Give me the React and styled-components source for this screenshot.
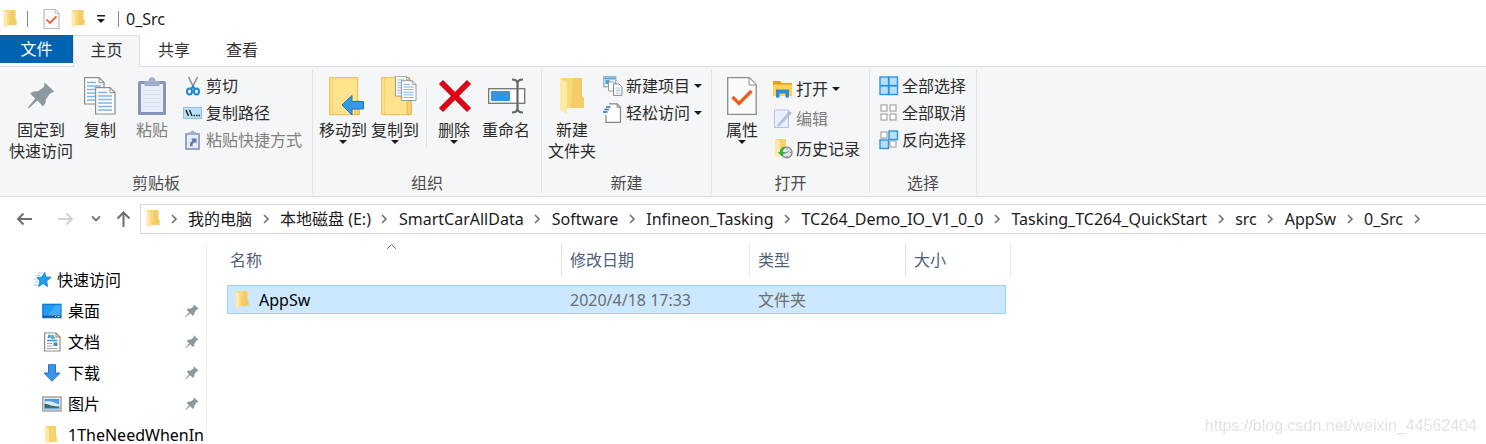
import React from "react";
import styled, { createGlobalStyle } from "styled-components";

const GlobalStyle = createGlobalStyle`
  *, *::before, *::after { box-sizing: border-box; }
  body {
    margin: 0;
    background: #fff;
    color: #1a1a1a;
    font: 16px/20px "Noto Sans", "Noto Sans CJK SC", sans-serif;
  }
  button { font: inherit; color: inherit; background: none; border: 0; padding: 0; cursor: pointer; }
  a { color: inherit; text-decoration: none; }
  ul, ol { list-style: none; margin: 0; padding: 0; }
  h1, h2 { margin: 0; font: inherit; }
  svg { display: block; flex: none; }
`;

const Window = styled.div`
  display: flex;
  flex-direction: column;
  height: 100vh;
  overflow: hidden;
`;

/* ---------- title bar ---------- */
const TitleBar = styled.header`
  display: flex;
  align-items: center;
  height: 35px;
  padding: 2px 0 0 3px;
`;
const TitleRule = styled.span`
  width: 1px;
  height: 16px;
  margin-left: ${(p) => p.$before}px;
  margin-right: ${(p) => p.$after}px;
  background: #8a8a8a;
`;
const QuickButton = styled.button`
  margin-right: ${(p) => p.$after}px;
`;

/* ---------- tabs ---------- */
const Tabs = styled.nav`
  display: flex;
  height: 32px;
  border-bottom: 1px solid #dcdddf;
`;
const FileTab = styled.button`
  width: 73px;
  height: 28px;
  background: #0063b1;
  color: #fff;
`;
const Tab = styled.button`
  width: ${(p) => (p.$active ? 67 : 68)}px;
  height: 32px;
  padding-bottom: 3px;
  border: 1px solid ${(p) => (p.$active ? "#dcdddf" : "transparent")};
  border-bottom: 0;
  background: ${(p) => (p.$active ? "#f5f6f7" : "none")};
  color: #333;
`;

/* ---------- ribbon ---------- */
const Ribbon = styled.div`
  display: flex;
  height: 130px;
  padding: 3px 0;
  background: #f5f6f7;
  border-bottom: 1px solid #dcdddf;
  color: #2b2b2b;
`;
const Group = styled.section`
  display: flex;
  flex-direction: column;
  justify-content: space-between;
  border-right: 1px solid #e1e2e4;
`;
const GroupBody = styled.div`
  display: flex;
  padding: 0 ${(p) => p.$right}px 0 ${(p) => p.$left}px;
`;
const GroupTitle = styled.h2`
  text-align: center;
  color: #4c4c4c;
`;
const BigButton = styled.button`
  position: relative;
  display: flex;
  flex-direction: column;
  align-items: center;
  align-self: flex-start;
  width: ${(p) => (p.$wide ? 66 : 52)}px;
  padding-top: 6px;
  line-height: 21px;
  white-space: nowrap;
  color: ${(p) => (p.disabled ? "#7f7f7f" : "inherit")};
`;
const BigIcon = styled.span`
  display: flex;
  align-items: center;
  height: 40px;
  margin-bottom: 4px;
`;
const BelowCaret = styled.span`
  position: absolute;
  top: 70px;
`;
const Divider = styled.span`
  width: 1px;
  height: 58px;
  margin: 19px 1px 0 5px;
  background: #dfe0e2;
`;
const SmallList = styled.ul`
  display: flex;
  flex-direction: column;
  padding-top: ${(p) => (p.$roomy ? 4 : 2)}px;
  margin-left: 5px;
`;
const SmallButton = styled.button`
  display: flex;
  align-items: center;
  gap: 3px;
  height: ${(p) => (p.$roomy ? 30 : 27)}px;
  white-space: nowrap;
  color: ${(p) => (p.disabled ? "#7f7f7f" : "inherit")};
`;
const SideCaret = styled.span`
  margin-left: 1px;
`;

/* ---------- address bar ---------- */
const AddressRow = styled.div`
  display: flex;
  align-items: center;
  height: 46px;
  padding: 7px 0 9px 16px;
`;
const NavButtons = styled.div`
  display: flex;
  align-items: center;
  width: 124px;
`;
const NavButton = styled.button`
  margin-right: ${(p) => p.$after}px;
`;
const AddressBox = styled.nav`
  display: flex;
  align-items: center;
  flex: 1;
  min-width: 0;
  height: 30px;
  padding-left: 5px;
  border: 1px solid #d9d9d9;
  border-right: 0;
  overflow: hidden;
`;
const Crumbs = styled.ol`
  display: flex;
  align-items: center;
`;
const Crumb = styled.li`
  display: flex;
  align-items: center;
  white-space: nowrap;
`;
const CrumbArrow = styled.span`
  display: flex;
  justify-content: center;
  width: 28px;
`;

/* ---------- body ---------- */
const Body = styled.div`
  display: flex;
  flex: 1;
  min-height: 0;
`;
const Sidebar = styled.nav`
  flex: none;
  width: 207px;
  padding-top: 21px;
  border-right: 1px solid #f0f0f0;
  overflow: hidden;
  color: #000;
`;
const SideItem = styled.a`
  display: flex;
  align-items: center;
  height: 31px;
  padding: 0 7px 0 ${(p) => (p.$root ? 33 : 42)}px;
  white-space: nowrap;
`;
const SideLabel = styled.span`
  flex: 1;
  margin-left: ${(p) => (p.$root ? 4 : 6)}px;
`;
const Files = styled.main`
  flex: 1;
  min-width: 0;
  padding-left: 20px;
`;
const FileTable = styled.table`
  table-layout: fixed;
  width: 784px;
  border-spacing: 0;
`;
const HeadCell = styled.th`
  position: relative;
  width: ${(p) => p.$width}px;
  height: 34px;
  padding: 0 0 0 ${(p) => (p.$first ? 3 : 8)}px;
  border-right: 1px solid #e5e5e5;
  text-align: left;
  font-weight: 400;
  color: #4c607a;
`;
const SortMark = styled.span`
  position: absolute;
  top: 0;
  left: 50%;
  margin-left: -8px;
`;
const Cell = styled.td`
  height: 37px;
  padding: 0 0 0 8px;
  border-top: 8px solid transparent;
  background: #cce8ff;
  background-clip: padding-box;
  box-shadow: inset 0 1px #99d1ff, inset 0 -1px #99d1ff;
  color: #6d6d6d;
  &:first-child {
    color: #000;
    box-shadow: inset 0 1px #99d1ff, inset 0 -1px #99d1ff, inset 1px 0 #99d1ff;
  }
  &:last-child {
    border-right: 5px solid transparent;
    box-shadow: inset 0 1px #99d1ff, inset 0 -1px #99d1ff, inset -1px 0 #99d1ff;
  }
`;
const FileName = styled.a`
  display: flex;
  align-items: center;
  gap: 10px;
`;
const Watermark = styled.p`
  position: fixed;
  right: 9px;
  bottom: 8px;
  margin: 0;
  font: 16px/20px "Liberation Sans", sans-serif;
  color: #e3e3e3;
`;

/* ---------- drawings ---------- */
const Caret = () => (
  <svg width="8" height="4" viewBox="0 0 8 4"><path d="M0 0h8L4 4z" fill="#1a1a1a" /></svg>
);
const FolderIcon = ({ width = 14, height = 18 }) => (
  <svg width={width} height={height} viewBox="0 0 26 36" preserveAspectRatio="none">
    <path d="M2 0h21v18l2 2v10H8L2 30z" fill="#fbd775" />
    <path d="M14 0h9v18l2 2v10H12z" fill="#f3cc66" />
    <path d="M1 0l7 5v31l-7-4z" fill="#ffe9a6" />
  </svg>
);
const MenuCaret = () => (
  <svg width="8" height="8" viewBox="0 0 8 8"><path d="M0 0h8v1.500H0zM0 4h8L4 8z" fill="#1a1a1a" /></svg>
);
const CheckPage = ({ width, height }) => (
  <svg width={width} height={height} viewBox="0 0 30 38">
    <path d="M.7.7h21.500l7 7v29.600H.7z" fill="#fbfbfc" stroke="#8b8b8b" strokeWidth="1.300" />
    <path d="M22 1v7h7" fill="#fff" stroke="#8b8b8b" />
    <path d="M5.500 20l6.500 6.500L24.500 14" fill="none" stroke="#f05a1c" strokeWidth="3.200" />
  </svg>
);
const PinShape = ({ size }) => (
  <svg width={size} height={size} viewBox="0 0 28 28">
    <path d="M17.500.5L27.200 9.500l-4.500 2.200-4 6c.3 2.800-.6 4.800-3 6.500l-5.200-5.700-9 8-.8-.8L8.200 16.500 3.200 11.500c2.500-2 5-2.700 7.800-2.200L17 5z" fill="#8c979e" />
  </svg>
);
const PageLines = ({ x, y }) => (
  <g transform={`translate(${x} ${y})`}>
    <path d="M.6.6h14.400l5 5v21.400H.6z" fill="#fff" stroke="#8d8d8d" strokeWidth="1.200" />
    <path d="M15 .6v5h5" fill="none" stroke="#8d8d8d" />
    <path d="M3 5.500h9M3 9h14M3 12.500h14M3 16h14M3 19.500h14M3 23h14" stroke="#7db4ec" strokeWidth="1.300" />
  </g>
);
const CopyIcon = () => (
  <svg width="32" height="38" viewBox="0 0 32 38"><PageLines x={0} y={0} /><PageLines x={11} y={10} /></svg>
);
const PasteIcon = () => (
  <svg width="28" height="38" viewBox="0 0 28 38">
    <rect x="0" y="4" width="28" height="34" rx="1.500" fill="#8795ba" />
    <rect x="3" y="7" width="22" height="28" fill="#e8eef8" />
    <path d="M5 13.500h18M5 17.500h18M5 21.500h18M5 25.500h18M5 29.500h18" stroke="#d3deee" />
    <path d="M6.500 4h4c0-5 7-5 7 0h4v5h-15z" fill="#9faccb" />
  </svg>
);
const CutIcon = () => (
  <svg width="20" height="20" viewBox="0 0 20 20">
    <path d="M5.500 1l6 12M14.500 1l-6 12" stroke="#8b8f94" strokeWidth="1.600" />
    <g fill="none" stroke="#1c87d0" strokeWidth="2"><ellipse cx="6.500" cy="15.500" rx="2.500" ry="3" /><ellipse cx="13.500" cy="15.500" rx="2.500" ry="3" /><path d="M8 13l2-2.500 2 2.500" /></g>
  </svg>
);
const PathIcon = () => (
  <svg width="20" height="12" viewBox="0 0 20 12">
    <rect x=".5" y=".5" width="18" height="11" fill="#b9def6" stroke="#8fc0e2" />
    <path d="M3 3l2.500 6M6.500 3L9 9M10.500 8.500h1.500M13 8.500h1.500M15.500 8.500H17" stroke="#222" strokeWidth="1.400" />
  </svg>
);
const PasteShortcutIcon = () => (
  <svg width="20" height="20" viewBox="0 0 20 20">
    <rect x="2" y="3" width="15" height="17" rx="1" fill="#95a3c4" />
    <rect x="4" y="5" width="11" height="13" fill="#e6edf8" />
    <path d="M6 2h2c0-2 3-2 3 0h2v3H6z" fill="#a3afcb" />
    <path d="M7 16c-.3-3 .8-4.500 2.500-5L8.200 8.500H13.500v5.300l-1.700-1.500C10 13 9.500 14 9.500 16.500z" fill="#6379ac" />
  </svg>
);
const ClosedFolder = () => (
  <g>
    <path d="M.6 1.600h28v37H.6z" fill="#fee28c" stroke="#e8c660" strokeWidth="1.200" />
    <path d="M3.500 2v36" stroke="#f3d274" />
    <path d="M26 38.600V27l1.500-2.500h2l1 2.500v11.600z" fill="#f5d06a" stroke="#dfba52" />
  </g>
);
const MoveToIcon = () => (
  <svg width="44" height="40" viewBox="-8 0 44 40">
    <ClosedFolder />
    <path d="M13 29l10-9.500v6h11.500v7.500H23v6z" fill="#3799e6" stroke="#1c74bd" />
  </svg>
);
const CopyToIcon = () => (
  <svg width="44" height="40" viewBox="-8 0 44 40">
    <ClosedFolder />
    <g transform="translate(14 -1) scale(.75)"><PageLines x={0} y={1} /><PageLines x={8} y={7} /></g>
  </svg>
);
const DeleteIcon = () => (
  <svg width="36" height="34" viewBox="-2 0 36 34">
    <path d="M5 1.500l12 12 12-12L32.500 5l-12 12 12 12-3.500 3.500-12-12-12 12L1.500 29l12-12-12-12z" fill="#e60012" stroke="#9d0a14" />
  </svg>
);
const RenameIcon = () => (
  <svg width="40" height="36" viewBox="-2 0 40 36">
    <rect x=".7" y="10.700" width="36" height="14.600" fill="#fff" stroke="#7c7c7c" strokeWidth="1.400" />
    <rect x="3" y="13" width="19" height="10" fill="#3394e4" />
    <path d="M24 1.500c3 0 5.500 1 5.500 4v25c0 3-2.500 4-5.500 4M35 1.500c-3 0-5.500 1-5.500 4v25c0 3 2.500 4 5.500 4" fill="none" stroke="#666" strokeWidth="2.200" />
  </svg>
);
const NewItemIcon = () => (
  <svg width="20" height="20" viewBox="0 0 20 20">
    <rect x=".8" y=".8" width="12" height="10" fill="#e8f4fb" stroke="#6d9bb5" />
    <path d="M1.500 1.500h10.500v2H1.500z" fill="#5aa8d8" /><rect x="2.500" y="4" width="4" height="4" fill="#4d9fc9" />
    <path d="M5.500 6h5l2 2v7h-7z" fill="#fff" stroke="#999" />
    <path d="M10.500 8h5.500l3 3v8.400h-8.500z" fill="#fff" stroke="#888" />
    <path d="M12.500 12h5M12.500 14.500h5M12.500 17h5" stroke="#9cc6ee" />
  </svg>
);
const EasyAccessIcon = () => (
  <svg width="20" height="20" viewBox="0 0 20 20">
    <path d="M3 .8h11l3.500 3.500v15H3z" fill="#fff" />
    <path d="M6 .8h8l3.500 3.500v15H3V12" fill="none" stroke="#848484" strokeWidth="1.200" />
    <path d="M14 .8v3.500h3.500" fill="none" stroke="#848484" />
    <path d="M3 4h4.500M1.500 6.500h4.500M0 9h4.500" stroke="#2c6fb5" strokeWidth="1.600" />
  </svg>
);
const OpenIcon = () => (
  <svg width="20" height="18" viewBox="0 0 20 18">
    <path d="M0 1h7l2 2h10v13H0z" fill="#e3a21a" />
    <path d="M0 4.500h19V16H0z" fill="#ffd24e" />
    <path d="M3 17.500V9.500h13v8h-3.500v-4h-6v4z" fill="#2b8bdc" />
  </svg>
);
const EditIcon = () => (
  <svg width="20" height="20" viewBox="0 0 20 20">
    <path d="M1.500 1h14v17.500h-14z" fill="#e9f0fa" stroke="#b4c1dc" />
    <path d="M4.500 16.500L15 4l2 1.800L6 17z" fill="#b9c8e4" stroke="#9fb1d3" strokeWidth=".8" />
    <path d="M14.500 3.500l1.500-1.500 2.800 2L17 6z" fill="#a5b7d8" />
  </svg>
);
const HistoryIcon = () => (
  <svg width="20" height="20" viewBox="0 0 20 20">
    <path d="M3 0h10v16H3z" fill="#f8d16b" /><path d="M2 0l5 3v16l-5-2.500z" fill="#ffe9a6" />
    <circle cx="13.800" cy="13.500" r="5.200" fill="#e6e8e8" stroke="#888f8f" strokeWidth="1.400" />
    <path d="M13.500 14l2.500-2.500M13.500 14h-2.500M14 9.500v1M14 17v1M17 13.500h1" stroke="#666" />
    <path d="M12 7.500c-3.500.5-5 2.700-5.200 5.500H5l3.800 4.700 3-4.700h-2c.1-2 .7-3.200 2.200-4z" fill="#2fb040" />
  </svg>
);
const SelectIcon = ({ on }) => (
  <svg width="20" height="20" viewBox="0 0 20 20">
    {[[1, 1], [10, 1], [1, 10], [10, 10]].map(([x, y], i) => (
      <rect
        key={i}
        x={on[i] ? x : x + 1}
        y={on[i] ? y : y + 1}
        width={on[i] ? 8.5 : 6}
        height={on[i] ? 8.5 : 6}
        fill={on[i] ? "#b4e0fc" : "#fff"}
        stroke={on[i] ? "#2f93dc" : "#a6a6a6"}
        strokeWidth={on[i] ? 1.4 : 1.2}
      />
    ))}
  </svg>
);
const Arrow = ({ dir, color = "#6f6f6f" }) => (
  <svg width="17" height="18" viewBox="0 0 17 18">
    <path d={dir === "back" ? "M16 9H2M7.500 3.500L2 9l5.500 5.500" : dir === "up" ? "M8.500 17V2.500M2.500 8.500l6-6 6 6" : "M1 9h14M9.500 3.500L15 9l-5.500 5.500"} fill="none" stroke={color} strokeWidth="2" />
  </svg>
);
const DownChevron = () => (
  <svg width="10" height="8" viewBox="0 0 10 8"><path d="M1 1.500l4 4 4-4" fill="none" stroke="#777" strokeWidth="1.800" /></svg>
);
const RightChevron = () => (
  <svg width="7" height="10" viewBox="0 0 7 10"><path d="M1 1l4 4-4 4" fill="none" stroke="#707070" strokeWidth="1.600" /></svg>
);
const StarIcon = () => (
  <svg width="20" height="18" viewBox="0 0 20 18">
    <path d="M11.800 1.500l.9 4.500 5.500.3-4.600 3.600 1 5.600-4.300-3-4.800 3 1.500-5.400L4 6.600l4.800-.4z" fill="#1fa0ee" stroke="#1d86d2" />
    <path d="M5 2h4M3 4.500h4M1 8h3.500M2 11h3M.5 14h4" stroke="#8fccf5" />
  </svg>
);
const DesktopIcon = () => (
  <svg width="20" height="16" viewBox="0 0 20 16">
    <rect x=".8" y="1.300" width="18.200" height="13.400" fill="#1d9bf7" stroke="#1272bd" strokeWidth="1.200" />
    <path d="M14 2h4.500v10.500H6z" fill="#3fabf9" />
    <path d="M1 13.500h18" stroke="#0c5798" strokeWidth="1.500" /><path d="M13 13.500h1M15.500 13.500h2" stroke="#d4ecfd" />
  </svg>
);
const DocumentIcon = () => (
  <svg width="20" height="20" viewBox="0 0 20 20">
    <path d="M2.600 1h11.400l4 4v14H2.600z" fill="#fff" stroke="#8b8b8b" strokeWidth="1.200" />
    <path d="M14 1v4h4" fill="none" stroke="#838383" />
    <path d="M6 6l1-2.500h1V6M9 4h3M9 6h4M5 8.500h10.500" fill="none" stroke="#2f93dc" strokeWidth="1.300" />
    <path d="M5 11.500h5M5 14h5M5 16.500h10.500" stroke="#a5a5a5" /><rect x="11.500" y="10.500" width="4" height="3.500" fill="#3b8fb8" />
  </svg>
);
const DownloadIcon = () => (
  <svg width="20" height="18" viewBox="0 0 20 18">
    <path d="M6.500.7h7V9H18l-8 8.300L2 9h4.500z" fill="#3a93e6" stroke="#2377c4" />
  </svg>
);
const PicturesIcon = () => (
  <svg width="20" height="16" viewBox="0 0 20 16">
    <rect x=".8" y="1" width="18.200" height="14" fill="#fff" stroke="#8b8b8b" strokeWidth="1.200" />
    <rect x="2.500" y="2.800" width="14.800" height="10.400" fill="#4f9ae8" />
    <path d="M2.500 5.500c5-1.500 9 .5 14.800 3v2H2.500z" fill="#d6ecfa" />
    <path d="M2.500 7.500l4 1c3 1.500 7 2 10.800 2v2.700H2.500z" fill="#3d6f6a" />
    <path d="M2.500 12h14.800v1.200H2.500z" fill="#6fb0cf" />
  </svg>
);
const SideFolder = () => (
  <svg width="20" height="18" viewBox="0 0 20 18">
    <path d="M4 0h10v10l1 1v5H4z" fill="#f8d16b" /><path d="M3 0l4 2.500V18l-4-2z" fill="#ffe9a6" />
  </svg>
);

/* ---------- composed parts ---------- */
const Big = ({ icon, lines, caret, wide, disabled }) => (
  <BigButton $wide={wide} disabled={disabled}>
    <BigIcon>{icon}</BigIcon>
    {lines.map((t) => <span key={t}>{t}</span>)}
    {caret && <BelowCaret><Caret /></BelowCaret>}
  </BigButton>
);
const Small = ({ icon, label, caret, roomy, disabled }) => (
  <li>
    <SmallButton $roomy={roomy} disabled={disabled}>
      {icon}{label}{caret && <SideCaret><Caret /></SideCaret>}
    </SmallButton>
  </li>
);
const RibbonGroup = ({ title, left = 4, right, children }) => (
  <Group aria-label={title}>
    <GroupBody $left={left} $right={right}>{children}</GroupBody>
    <GroupTitle>{title}</GroupTitle>
  </Group>
);

const crumbs = ["我的电脑", "本地磁盘 (E:)", "SmartCarAllData", "Software", "Infineon_Tasking", "TC264_Demo_IO_V1_0_0", "Tasking_TC264_QuickStart", "src", "AppSw", "0_Src"];
const places = [
  { label: "桌面", icon: <DesktopIcon />, pinned: true },
  { label: "文档", icon: <DocumentIcon />, pinned: true },
  { label: "下载", icon: <DownloadIcon />, pinned: true },
  { label: "图片", icon: <PicturesIcon />, pinned: true },
  { label: "1TheNeedWhenIn", icon: <SideFolder /> },
];

export default function App() {
  return (
    <Window>
      <GlobalStyle />
      <TitleBar>
        <FolderIcon />
        <TitleRule $before={10} $after={15} />
        <QuickButton $after={11} aria-label="属性"><CheckPage width={17} height={20} /></QuickButton>
        <QuickButton $after={12} aria-label="新建文件夹"><FolderIcon /></QuickButton>
        <QuickButton $after={0} aria-label="自定义快速访问工具栏"><MenuCaret /></QuickButton>
        <TitleRule $before={13} $after={7} />
        <h1>0_Src</h1>
      </TitleBar>
      <Tabs>
        <FileTab>文件</FileTab>
        <Tab $active>主页</Tab>
        <Tab>共享</Tab>
        <Tab>查看</Tab>
      </Tabs>
      <Ribbon>
        <RibbonGroup title="剪贴板" left={8} right={10}>
          <Big wide icon={<PinShape size={28} />} lines={["固定到", "快速访问"]} />
          <Big icon={<CopyIcon />} lines={["复制"]} />
          <Big icon={<PasteIcon />} lines={["粘贴"]} disabled />
          <SmallList>
            <Small icon={<CutIcon />} label="剪切" />
            <Small icon={<PathIcon />} label="复制路径" />
            <Small icon={<PasteShortcutIcon />} label="粘贴快捷方式" disabled />
          </SmallList>
        </RibbonGroup>
        <RibbonGroup title="组织" right={9}>
          <Big icon={<MoveToIcon />} lines={["移动到"]} caret />
          <Big icon={<CopyToIcon />} lines={["复制到"]} caret />
          <Divider />
          <Big icon={<DeleteIcon />} lines={["删除"]} caret />
          <Big icon={<RenameIcon />} lines={["重命名"]} />
        </RibbonGroup>
        <RibbonGroup title="新建" right={9}>
          <Big icon={<FolderIcon width={26} height={36} />} lines={["新建", "文件夹"]} />
          <SmallList>
            <Small icon={<NewItemIcon />} label="新建项目" caret />
            <Small icon={<EasyAccessIcon />} label="轻松访问" caret />
          </SmallList>
        </RibbonGroup>
        <RibbonGroup title="打开" right={9}>
          <Big icon={<CheckPage width={30} height={38} />} lines={["属性"]} caret />
          <SmallList $roomy>
            <Small roomy icon={<OpenIcon />} label="打开" caret />
            <Small roomy icon={<EditIcon />} label="编辑" disabled />
            <Small roomy icon={<HistoryIcon />} label="历史记录" />
          </SmallList>
        </RibbonGroup>
        <RibbonGroup title="选择" right={10}>
          <SmallList>
            <Small icon={<SelectIcon on={[1, 1, 1, 1]} />} label="全部选择" />
            <Small icon={<SelectIcon on={[0, 0, 0, 0]} />} label="全部取消" />
            <Small icon={<SelectIcon on={[0, 1, 1, 0]} />} label="反向选择" />
          </SmallList>
        </RibbonGroup>
      </Ribbon>
      <AddressRow>
        <NavButtons>
          <NavButton $after={24} aria-label="后退"><Arrow dir="back" /></NavButton>
          <NavButton $after={17} aria-label="前进"><Arrow dir="forward" color="#d0d0d0" /></NavButton>
          <NavButton $after={14} aria-label="最近位置"><DownChevron /></NavButton>
          <NavButton $after={0} aria-label="上移"><Arrow dir="up" /></NavButton>
        </NavButtons>
        <AddressBox aria-label="地址">
          <FolderIcon />
          <Crumbs>
            <Crumb><CrumbArrow><RightChevron /></CrumbArrow></Crumb>
            {crumbs.map((c) => (
              <Crumb key={c}><a href="#">{c}</a><CrumbArrow><RightChevron /></CrumbArrow></Crumb>
            ))}
          </Crumbs>
        </AddressBox>
      </AddressRow>
      <Body>
        <Sidebar aria-label="导航窗格">
          <SideItem href="#" $root><StarIcon /><SideLabel $root>快速访问</SideLabel></SideItem>
          {places.map((p) => (
            <SideItem href="#" key={p.label}>
              {p.icon}<SideLabel>{p.label}</SideLabel>{p.pinned && <PinShape size={14} />}
            </SideItem>
          ))}
        </Sidebar>
        <Files>
          <FileTable>
            <thead>
              <tr>
                <HeadCell $first $width={335} aria-sort="ascending">
                  名称
                  <SortMark><svg width="11" height="7" viewBox="0 0 11 7"><path d="M1 6l4.500-4.500L10 6" fill="none" stroke="#777" /></svg></SortMark>
                </HeadCell>
                <HeadCell $width={188}>修改日期</HeadCell>
                <HeadCell $width={156}>类型</HeadCell>
                <HeadCell $width={105}>大小</HeadCell>
              </tr>
            </thead>
            <tbody>
              <tr>
                <Cell><FileName href="#"><FolderIcon />AppSw</FileName></Cell>
                <Cell>2020/4/18 17:33</Cell>
                <Cell>文件夹</Cell>
                <Cell />
              </tr>
            </tbody>
          </FileTable>
        </Files>
      </Body>
      <Watermark>https://blog.csdn.net/weixin_44562404</Watermark>
    </Window>
  );
}
